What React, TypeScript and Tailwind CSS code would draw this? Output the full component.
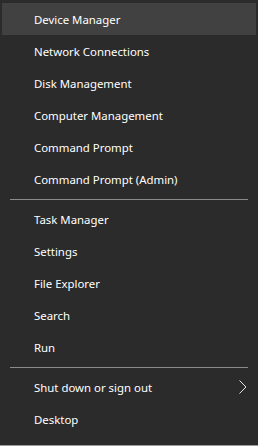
const groups = [
  ['Device Manager', 'Network Connections', 'Disk Management', 'Computer Management', 'Command Prompt', 'Command Prompt (Admin)'],
  ['Task Manager', 'Settings', 'File Explorer', 'Search', 'Run'],
  ['Shut down or sign out', 'Desktop'],
]

function Item({ label, active, sub }: { label: string; active?: boolean; sub?: boolean }) {
  return (
    <div
      className={`mx-[2px] flex h-[32px] items-center pl-[32px] pr-[9px] ${active ? 'bg-[#414141]' : ''}`}
    >
      <span className="flex-1 pt-[2px] text-[11.4px] text-white">{label}</span>
      {sub && (
        <svg width="8" height="14" viewBox="0 0 8 14" fill="none" stroke="#e6e6e6" strokeWidth="1">
          <polyline points="0.5,0.5 7,7 0.5,13.5" />
        </svg>
      )}
    </div>
  )
}

export default function App() {
  return (
    <div
      className="flex h-[446px] w-[258px] flex-col bg-[#2b2b2b] pt-[3px]"
      style={{ fontFamily: '"Noto Sans", "Open Sans", sans-serif' }}
    >
      {groups.map((g, gi) => (
        <div key={gi}>
          {gi > 0 && (
            <div className="flex h-[8px] items-center px-[10px]">
              <div className="h-px w-full bg-[#8a8a8a]" />
            </div>
          )}
          {g.map((label) => (
            <Item
              key={label}
              label={label}
              active={label === 'Device Manager'}
              sub={label === 'Shut down or sign out'}
            />
          ))}
        </div>
      ))}
      <div className="flex-1" />
      <div className="h-px bg-[#9a9a9a]" />
    </div>
  )
}
